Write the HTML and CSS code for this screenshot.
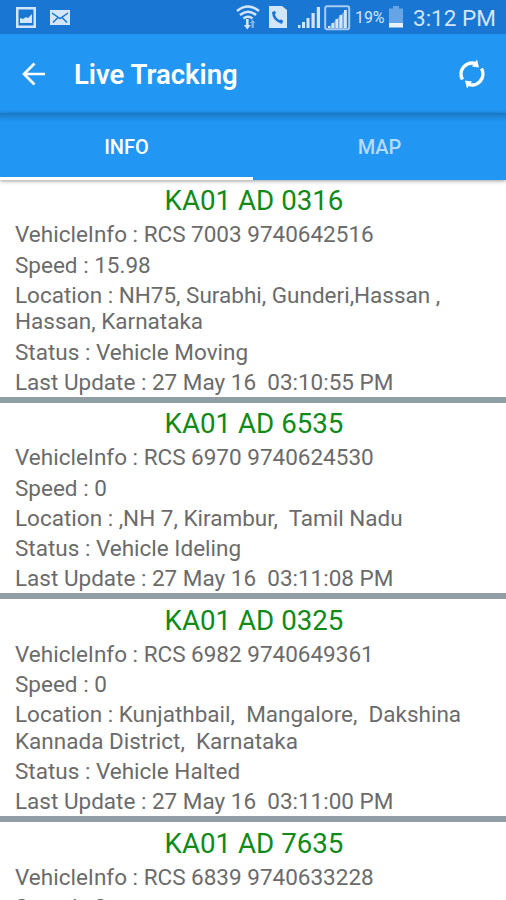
FILE: index.html
```html
<!DOCTYPE html>
<html lang="en">
<head>
<meta charset="utf-8">
<title>Live Tracking</title>
<link rel="stylesheet" href="styles.css">
</head>
<body>
<div class="screen">
  <header class="status">
    <svg class="status-icons" viewBox="0 0 80 34" width="80" height="34">
      <path fill="#d3e5f9" fill-rule="evenodd" d="M16 7h20v21H16zM18.500 9.500v16h15v-16z"/>
      <path fill="#d3e5f9" d="M20 23v-5l3 1 3-2 2 1 4-4v9z"/>
      <rect x="50" y="10" width="20" height="15" fill="#d3e5f9"/>
      <path fill="none" stroke="#1976d2" stroke-width="1.500" d="M52 13l8 5.500 8-5.500M53 22.500l5-5M67 22.500l-5-5"/>
    </svg>
    <svg class="status-icons" viewBox="234 0 118 34" width="118" height="34">
      <g fill="none" stroke="#d3e5f9" stroke-width="2.500">
        <path d="M237 11q11-9 22 0M240 15q8-6.500 16 0M243.500 18.500q4.500-3.500 9 0"/>
      </g>
      <path fill="#d3e5f9" d="M246 19h2.600v6h2.200l-3.500 4.500-3.500-4.500h2.200z"/>
      <path fill="#7fb3ea" d="M251.500 28v-5h-1.500l2.700-3.500 2.700 3.500h-1.500v5z"/>
      <path fill="#d3e5f9" d="M269 6h13l5 4v18h-18z"/>
      <path fill="none" stroke="#1976d2" stroke-width="2.500" d="M273.500 12q-.5 8 9 10.500"/>
      <path stroke="#1976d2" stroke-width="2.800" d="M272.500 13.500l3-1.500M280 23l2-3"/>
      <path fill="#d3e5f9" d="M298 25h2.500v3H298zM302 22h3v6h-3zM306.500 18h3v10h-3zM311.500 13h3.200v15h-3.200zM316.800 7h3.200v21h-3.200z"/>
      <rect x="325.200" y="6.200" width="24" height="23" rx="2" fill="#1976d2" stroke="#a9cbf2" stroke-width="2"/>
      <path fill="#74ace9" d="M328 28L347 9v19z"/>
      <path fill="#d3e5f9" d="M328 26h2v2h-2zM331.500 23h2.500v5h-2.500zM335.500 19h2.500v9h-2.500zM339.500 15h2.700v13h-2.700zM344 10h2.700v18H344z"/>
    </svg>
    <span class="percent">19%</span>
    <svg class="battery" viewBox="0 0 16 34" width="16" height="34">
      <path fill="#65a5e6" d="M5 6h6v2.500h4V23H1V8.500h4z"/>
      <path fill="#e8f2fd" d="M1 23h14v4.500H1z"/>
    </svg>
    <span class="clock">3:12 PM</span>
  </header>

  <div class="toolbar">
    <svg class="back" viewBox="0 0 24 24" width="24" height="24" fill="none" stroke="#fff" stroke-width="2.700">
      <path d="M23 12H2M12.500 1.500L2 12l10.500 10.500"/>
    </svg>
    <h1 class="title">Live Tracking</h1>
    <svg class="refresh" viewBox="0 0 28 30" width="28" height="30">
      <g fill="none" stroke="#fff" stroke-width="3.500">
        <path d="M4.500 20.500A11 11 0 0 1 18.500 5M23.500 9.500A11 11 0 0 1 9.500 25"/>
      </g>
      <path fill="#fff" d="M19 .5l2 8-7-1zM9 29.500L7 21.500l7 1z"/>
    </svg>
  </div>

  <nav class="tabs">
    <div class="tab active">INFO</div>
    <div class="tab">MAP</div>
  </nav>

  <main class="list">
    <section class="card">
      <h2>KA01 AD 0316</h2>
      <p>VehicleInfo : RCS 7003 9740642516</p>
      <p>Speed : 15.98</p>
      <p>Location : NH75, Surabhi, Gunderi,Hassan ,
Hassan, Karnataka</p>
      <p>Status : Vehicle Moving</p>
      <p>Last Update : 27 May 16  03:10:55 PM</p>
    </section>
    <section class="card">
      <h2>KA01 AD 6535</h2>
      <p>VehicleInfo : RCS 6970 9740624530</p>
      <p>Speed : 0</p>
      <p>Location : ,NH 7, Kirambur,  Tamil Nadu</p>
      <p>Status : Vehicle Ideling</p>
      <p>Last Update : 27 May 16  03:11:08 PM</p>
    </section>
    <section class="card">
      <h2>KA01 AD 0325</h2>
      <p>VehicleInfo : RCS 6982 9740649361</p>
      <p>Speed : 0</p>
      <p>Location : Kunjathbail,  Mangalore,  Dakshina
Kannada District,  Karnataka</p>
      <p>Status : Vehicle Halted</p>
      <p>Last Update : 27 May 16  03:11:00 PM</p>
    </section>
    <section class="card">
      <h2>KA01 AD 7635</h2>
      <p>VehicleInfo : RCS 6839 9740633228</p>
      <p>Speed : 0</p>
    </section>
  </main>
</div>
</body>
</html>
```
FILE: styles.css
```css
* { box-sizing: border-box; }

body {
  margin: 0;
  background: #fff;
  font-family: Roboto, "Liberation Sans", sans-serif;
}

.screen {
  display: flex;
  flex-direction: column;
  width: 506px;
  height: 900px;
  overflow: hidden;
}

.status {
  display: flex;
  align-items: center;
  flex: 0 0 34px;
  background: #1976d2;
  color: #d3e5f9;
  white-space: nowrap;
}

.status-icons { flex: none; }

.status-icons + .status-icons { margin-left: 154px; }

.percent {
  width: 30px;
  margin-left: 3px;
  font-size: 16px;
  letter-spacing: -0.1px;
}

.battery {
  flex: none;
  margin-left: 3px;
}

.clock {
  margin: 2px 0 0 9px;
  font-size: 22.5px;
}

.toolbar {
  display: flex;
  align-items: center;
  flex: 0 0 79px;
  padding: 0 20px 0 22px;
  background: #2196f3;
}

.title {
  flex: 1;
  margin: 3px 0 0 28px;
  color: #fff;
  font-size: 27.5px;
  font-weight: 600;
  line-height: 32px;
}

.tabs {
  display: flex;
  flex: 0 0 67px;
  background: linear-gradient(#1b78c4, #1e87dc 4px, #2196f3 9px);
  box-shadow: 0 1px 4px rgba(0, 0, 0, 0.4);
}

.tab {
  flex: 1;
  padding-top: 4px;
  border-bottom: 3px solid transparent;
  color: #b5dafb;
  font-size: 20px;
  font-weight: 500;
  line-height: 60px;
  text-align: center;
}

.tab.active {
  border-bottom-color: #fff;
  color: #fff;
}

.list {
  flex: 1;
  min-height: 0;
}

.card {
  padding: 4.3px 15px 1.6px;
  border-bottom: 6px solid #929ea5;
}

.card h2 {
  margin: 0 0 0 2px;
  color: #108a18;
  font-size: 27.7px;
  font-weight: 400;
  line-height: 33.3px;
  text-align: center;
}

.card p {
  margin: 3.75px 0 0;
  color: #6b6b6b;
  font-size: 22.5px;
  line-height: 26.5px;
  white-space: pre;
}
```
